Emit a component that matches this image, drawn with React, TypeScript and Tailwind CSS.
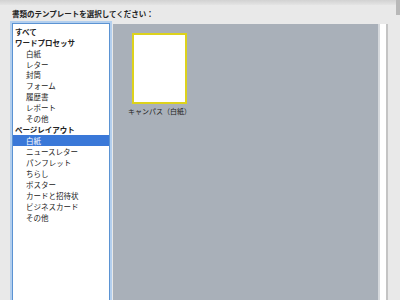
import React from 'react';

const items: { label: string; header?: boolean; selected?: boolean }[] = [
  { label: 'すべて', header: true },
  { label: 'ワードプロセッサ', header: true },
  { label: '白紙' },
  { label: 'レター' },
  { label: '封筒' },
  { label: 'フォーム' },
  { label: '履歴書' },
  { label: 'レポート' },
  { label: 'その他' },
  { label: 'ページレイアウト', header: true },
  { label: '白紙', selected: true },
  { label: 'ニュースレター' },
  { label: 'パンフレット' },
  { label: 'ちらし' },
  { label: 'ポスター' },
  { label: 'カードと招待状' },
  { label: 'ビジネスカード' },
  { label: 'その他' },
];

const font = { fontFamily: '"Noto Sans CJK JP", "Noto Sans", sans-serif' };

export default function App() {
  return (
    <div
      className="relative w-[400px] h-[300px] overflow-hidden bg-[#e9e9e9] text-[#222]"
      style={font}
    >
      {/* top edge of window chrome */}
      <div className="h-[5px] bg-gradient-to-b from-[#d2d2d2] to-[#e4e4e4]" />
      <div className="absolute right-0 top-0 w-[4px] h-[15px] bg-[#b8b8b8]" />

      <div className="pl-[12px] pt-[4px] h-[18px] text-[7.5px] leading-[10px] font-bold">
        書類のテンプレートを選択してください：
      </div>

      <div className="flex h-[277px]">
        {/* category list */}
        <div className="ml-[12px] w-[98px] h-[290px] bg-white border border-[#5b93d3] shadow-[0_0_0_2px_#b3cfee] pt-[2px]">
          {items.map((it, i) => (
            <div
              key={i}
              className={`h-[10.94px] flex items-center text-[7.5px] leading-none ${
                it.header ? 'pl-[2px] font-bold' : 'pl-[13px]'
              } ${it.selected ? 'bg-[#3a78d8] text-white' : ''}`}
            >
              {it.label}
            </div>
          ))}
        </div>

        {/* template preview area */}
        <div className="ml-[3px] mt-[1px] w-[265px] h-[290px] bg-[#a9b0b9] pt-[9px] pl-[15px]">
          <div className="w-[63px] flex flex-col items-center">
            <div className="w-[55px] h-[71px] bg-white border-2 border-[#ddd21c]" />
            <div className="mt-[3px] text-[7px] leading-[8px] whitespace-nowrap">
              キャンパス（白紙）
            </div>
          </div>
        </div>

        {/* scrollbar strip */}
        <div className="mt-[1px] w-[2px] h-[290px] bg-[#d6d9dd]" />
        <div className="mt-[1px] w-[6px] h-[290px] bg-white" />
        <div className="mt-[1px] w-[2px] h-[290px] bg-[#c4c4c4]" />
      </div>
    </div>
  );
}
